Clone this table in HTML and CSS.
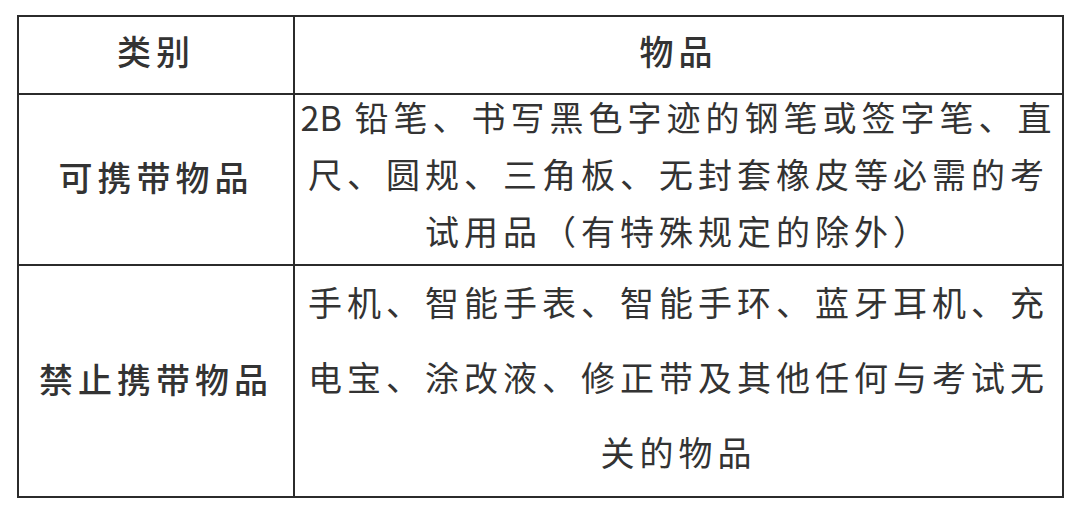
FILE: index.html
```html
<!DOCTYPE html>
<html lang="zh-CN">
<head>
<meta charset="utf-8">
<link rel="stylesheet" href="styles.css">
</head>
<body>
<div class="page">
  <table class="items">
    <colgroup><col class="c1"><col class="c2"></colgroup>
    <tr class="head">
      <th><div class="lbl hd">类别</div></th>
      <th><div class="lbl hd">物品</div></th>
    </tr>
    <tr class="r1">
      <td class="cat"><div class="lbl">可携带物品</div></td>
      <td class="desc">
        <div class="lines short">
          <span class="ln"><span class="num">2B</span> 铅笔、书写黑色字迹的钢笔或签字笔、直</span>
          <span class="ln">尺、圆规、三角板、无封套橡皮等必需的考</span>
          <span class="ln">试用品（有特殊规定的除外）</span>
        </div>
      </td>
    </tr>
    <tr class="r2">
      <td class="cat"><div class="lbl">禁止携带物品</div></td>
      <td class="desc">
        <div class="lines tall">
          <span class="ln">手机、智能手表、智能手环、蓝牙耳机、充</span>
          <span class="ln">电宝、涂改液、修正带及其他任何与考试无</span>
          <span class="ln">关的物品</span>
        </div>
      </td>
    </tr>
  </table>
</div>
</body>
</html>
```

FILE: styles.css
```css
html, body {
  margin: 0;
  padding: 0;
  background: #ffffff;
}
.page {
  padding: 15px 0 0 17px;
}
.items {
  border-collapse: collapse;
  width: 1047px;
  font-family: "Noto Sans CJK SC", "Noto Sans", sans-serif;
  color: #333333;
  font-size: 34px;
  letter-spacing: 5px;
}
.c1 { width: 276px; }
.items th, .items td {
  border: 2px solid #2b2b2b;
  padding: 0;
  text-align: center;
  vertical-align: middle;
}
.items th {
  font-weight: 500;
  height: 76px;
}
.cat {
  font-weight: 500;
}
.lbl {
  margin-top: -6px;
}
.lbl.hd {
  margin-top: -10px;
}
.r1 td { height: 169px; }
.r2 td { height: 230px; }
.lines {
  font-weight: 400;
}
.ln {
  display: block;
  white-space: nowrap;
}
.num {
  letter-spacing: 0;
}
.short {
  line-height: 57px;
  margin-top: -12px;
}
.tall {
  line-height: 75px;
  margin-top: -9px;
}
```
